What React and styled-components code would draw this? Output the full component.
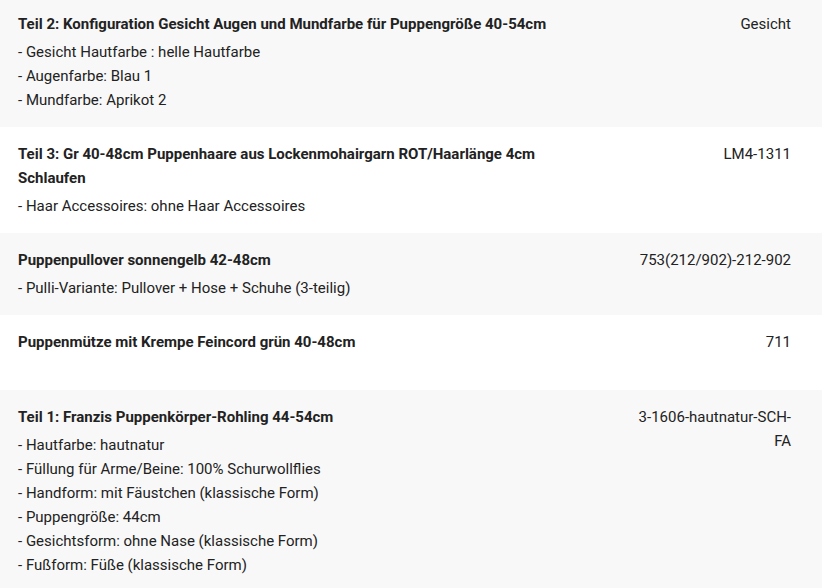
import React from "react";
import styled, {createGlobalStyle} from "styled-components";

const GlobalStyle = createGlobalStyle`
  body {
    margin: 0;
    background: #ffffff;
    font-family: Roboto, "Liberation Sans", Arial, sans-serif;
    color: #222222;
  }
`;

const List = styled.div`
  display: flex;
  flex-direction: column;
  margin-top: -3px;
`;

const Row = styled.div`
  display: grid;
  grid-template-columns: 1fr 160px;
  column-gap: 50px;
  box-sizing: border-box;
  min-height: 75px;
  padding: 15px 31px 15px 18px;
  background: ${props => props.shaded ? "#f8f8f8" : "#ffffff"};
  font-size: 15px;
  line-height: 24px;
`;

const Info = styled.div`
  display: flex;
  flex-direction: column;
`;

const Title = styled.div`
  font-weight: 700;
  margin-bottom: 4px;
`;

const Option = styled.div`
  font-weight: 400;
`;

const Sku = styled.div`
  text-align: right;
  font-weight: 400;
`;

const items = [
    {
        title: "Teil 2: Konfiguration Gesicht Augen und Mundfarbe für Puppengröße 40-54cm",
        options: ["Gesicht Hautfarbe : helle Hautfarbe", "Augenfarbe: Blau 1", "Mundfarbe: Aprikot 2"],
        sku: "Gesicht"
    },
    {
        title: "Teil 3: Gr 40-48cm Puppenhaare aus Lockenmohairgarn ROT/Haarlänge 4cm Schlaufen",
        options: ["Haar Accessoires: ohne Haar Accessoires"],
        sku: "LM4-1311"
    },
    {
        title: "Puppenpullover sonnengelb 42-48cm",
        options: ["Pulli-Variante: Pullover + Hose + Schuhe (3-teilig)"],
        sku: "753(212/902)-212-902"
    },
    {
        title: "Puppenmütze mit Krempe Feincord grün 40-48cm",
        options: [],
        sku: "711"
    },
    {
        title: "Teil 1: Franzis Puppenkörper-Rohling 44-54cm",
        options: [
            "Hautfarbe: hautnatur",
            "Füllung für Arme/Beine: 100% Schurwollflies",
            "Handform: mit Fäustchen (klassische Form)",
            "Puppengröße: 44cm",
            "Gesichtsform: ohne Nase (klassische Form)",
            "Fußform: Füße (klassische Form)"
        ],
        sku: "3-1606-hautnatur-SCH-FA"
    }
];

const App = () => {
    return (
        <>
            <GlobalStyle/>
            <List>
                {items.map((item, i) => (
                    <Row key={item.sku} shaded={i % 2 === 0}>
                        <Info>
                            <Title>{item.title}</Title>
                            {item.options.map(o => <Option key={o}>- {o}</Option>)}
                        </Info>
                        <Sku>{item.sku}</Sku>
                    </Row>
                ))}
            </List>
        </>
    )
}
export default App
